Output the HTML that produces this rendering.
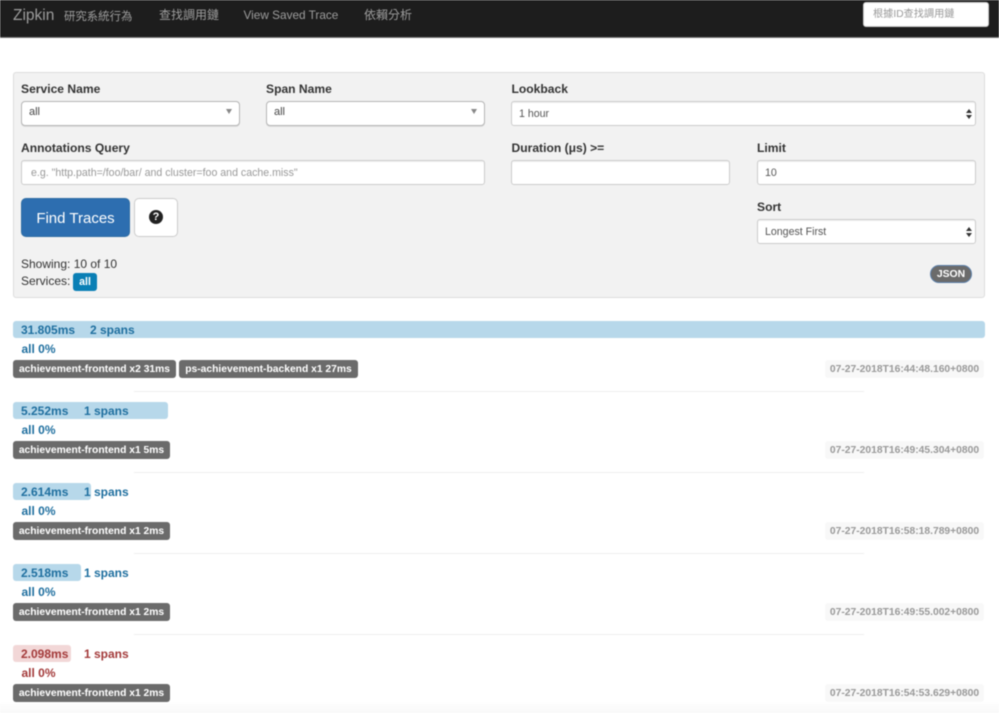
<!DOCTYPE html>
<html><head><meta charset="utf-8"><style>
html,body{margin:0;padding:0;background:#fff;}
#p{position:relative;width:999px;height:713px;overflow:hidden;background:#fff;font-family:"Liberation Sans","Noto Sans CJK TC",sans-serif;color:#333;filter:blur(.45px);}
#p div{position:absolute;box-sizing:border-box;white-space:nowrap;}
.nav{color:#9d9d9d;font-size:12px;top:7px;line-height:16px;}
.lb{font-weight:bold;font-size:12.1px;line-height:16px;color:#333;}
.in{background:#fff;border:1px solid #ccc;border-radius:3px;height:25px;font-size:10.6px;line-height:25px;padding-left:7px;color:#555;box-shadow:inset 0 1px 1px rgba(0,0,0,.07);}
.s2{border:1px solid #b5b5b5;border-radius:4px;box-shadow:0 1px 0 rgba(0,0,0,.08);color:#444;font-size:11px;line-height:20px;}
.ar{width:0;height:0;border-left:3px solid transparent;border-right:3px solid transparent;border-top:5px solid #888;}
.up{width:0;height:0;border-left:3px solid transparent;border-right:3px solid transparent;border-bottom:4px solid #333;}
.dn{width:0;height:0;border-left:3px solid transparent;border-right:3px solid transparent;border-top:4px solid #333;}
.bar{height:17px;border-radius:3px;}
.t{font-size:12px;font-weight:bold;line-height:16px;}
.b{color:#1f6f9f;}.r{color:#a33a3a;}
.g{height:18px;background:#6b6b6b;color:#fff;font-size:10.3px;font-weight:bold;line-height:19px;border-radius:3px;text-align:center;}
.d{left:825px;width:159px;height:18px;background:#f8f8f8;color:#999;font-size:10.3px;font-weight:bold;line-height:19px;border-radius:3px;text-align:center;}
.hr{left:134px;width:730px;height:1px;background:#eee;}
</style></head><body><div id="p">
<div style="left:0;top:0;width:999px;height:38px;background:#1d1d1d;border-bottom:1px solid #777;"></div>
<div style="left:13px;top:6px;color:#9d9d9d;font-size:15.5px;line-height:20px;">Zipkin</div>
<div class="nav" style="left:64px;font-size:11.4px;top:9px;">研究系統行為</div>
<div class="nav" style="left:159px;">查找調用鏈</div>
<div class="nav" style="left:243.5px;font-size:11.8px;">View Saved Trace</div>
<div class="nav" style="left:364px;">依賴分析</div>
<div style="left:863px;top:2px;width:126px;height:25px;background:#fff;border-radius:3px;border:1px solid #ccc;color:#999;font-size:10.2px;line-height:23px;padding-left:9px;">根據ID查找調用鏈</div>

<div style="left:13px;top:72px;width:972px;height:226px;background:#f2f2f2;border:1px solid #ddd;border-radius:3px;"></div>

<div class="lb" style="left:21px;top:81px;">Service Name</div>
<div class="in s2" style="left:21px;top:101px;width:219px;">all</div>
<div class="ar" style="left:226px;top:109px;"></div>
<div class="lb" style="left:266px;top:81px;">Span Name</div>
<div class="in s2" style="left:266px;top:101px;width:219px;">all</div>
<div class="ar" style="left:471px;top:109px;"></div>
<div class="lb" style="left:511.5px;top:81px;">Lookback</div>
<div class="in" style="left:511px;top:101px;width:465px;">1 hour</div>
<div class="up" style="left:966px;top:109px;"></div><div class="dn" style="left:966px;top:115px;"></div>

<div class="lb" style="left:21px;top:140px;">Annotations Query</div>
<div class="in" style="left:21px;top:160px;width:464px;color:#999;font-size:10.6px;padding-left:9px;">e.g. "http.path=/foo/bar/ and cluster=foo and cache.miss"</div>
<div class="lb" style="left:511.5px;top:140px;">Duration (μs) &gt;=</div>
<div class="in" style="left:511px;top:160px;width:219px;"></div>
<div class="lb" style="left:757px;top:140px;">Limit</div>
<div class="in" style="left:757px;top:160px;width:219px;">10</div>

<div style="left:21px;top:198px;width:109px;height:39px;background:#2d6eb0;border:1px solid #2e6da4;border-radius:5px;color:#fff;font-size:15px;line-height:39px;text-align:center;">Find Traces</div>
<div style="left:134px;top:198px;width:44px;height:39px;background:#fff;border:1px solid #ccc;border-radius:5px;"></div>
<div style="left:149px;top:210px;width:14px;height:14px;border-radius:50%;background:#222;color:#fff;font-size:11px;font-weight:bold;line-height:14px;text-align:center;">?</div>

<div class="lb" style="left:757px;top:199px;">Sort</div>
<div class="in" style="left:757px;top:219px;width:219px;height:25px;">Longest First</div>
<div class="up" style="left:966px;top:227px;"></div><div class="dn" style="left:966px;top:233px;"></div>

<div style="left:21px;top:256px;font-size:12px;line-height:16px;">Showing: 10 of 10</div>
<div style="left:21px;top:273px;font-size:12px;line-height:16px;">Services:</div>
<div style="left:73px;top:273px;width:24px;height:18px;background:#0a7fb5;color:#fff;font-size:10.6px;font-weight:bold;line-height:19px;text-align:center;border-radius:3px;">all</div>
<div style="left:930px;top:265px;width:42px;height:18px;background:#6b6b6b;border:1px solid #5a7ea8;color:#fff;font-size:10.4px;font-weight:bold;line-height:18px;text-align:center;border-radius:9px;">JSON</div>

<!-- row 1 -->
<div class="bar" style="left:13px;top:321px;width:972px;background:#b7d8ea;"></div>
<div class="t b" style="left:21px;top:322px;">31.805ms</div>
<div class="t b" style="left:90px;top:322px;">2 spans</div>
<div class="t b" style="left:21.5px;top:341px;">all 0%</div>
<div class="g" style="left:13px;top:360px;width:163px;">achievement-frontend x2 31ms</div>
<div class="g" style="left:179px;top:360px;width:179px;">ps-achievement-backend x1 27ms</div>
<div class="d" style="top:360px;">07-27-2018T16:44:48.160+0800</div>
<div class="hr" style="top:391px;"></div>

<!-- row 2 -->
<div class="bar" style="left:13px;top:402px;width:155px;background:#b7d8ea;"></div>
<div class="t b" style="left:21px;top:403px;">5.252ms</div>
<div class="t b" style="left:84px;top:403px;">1 spans</div>
<div class="t b" style="left:21.5px;top:422px;">all 0%</div>
<div class="g" style="left:13px;top:441px;width:157px;">achievement-frontend x1 5ms</div>
<div class="d" style="top:441px;">07-27-2018T16:49:45.304+0800</div>
<div class="hr" style="top:472px;"></div>

<!-- row 3 -->
<div class="bar" style="left:13px;top:483px;width:78px;background:#b7d8ea;"></div>
<div class="t b" style="left:21px;top:484px;">2.614ms</div>
<div class="t b" style="left:84px;top:484px;">1 spans</div>
<div class="t b" style="left:21.5px;top:503px;">all 0%</div>
<div class="g" style="left:13px;top:522px;width:157px;">achievement-frontend x1 2ms</div>
<div class="d" style="top:522px;">07-27-2018T16:58:18.789+0800</div>
<div class="hr" style="top:553px;"></div>

<!-- row 4 -->
<div class="bar" style="left:13px;top:564px;width:68px;background:#b7d8ea;"></div>
<div class="t b" style="left:21px;top:565px;">2.518ms</div>
<div class="t b" style="left:84px;top:565px;">1 spans</div>
<div class="t b" style="left:21.5px;top:584px;">all 0%</div>
<div class="g" style="left:13px;top:603px;width:157px;">achievement-frontend x1 2ms</div>
<div class="d" style="top:603px;">07-27-2018T16:49:55.002+0800</div>
<div class="hr" style="top:634px;"></div>

<!-- row 5 -->
<div class="bar" style="left:13px;top:645px;width:58px;background:#f2d7d7;"></div>
<div class="t r" style="left:21px;top:646px;">2.098ms</div>
<div class="t r" style="left:84px;top:646px;">1 spans</div>
<div class="t r" style="left:21.5px;top:665px;">all 0%</div>
<div class="g" style="left:13px;top:684px;width:157px;">achievement-frontend x1 2ms</div>
<div class="d" style="top:684px;">07-27-2018T16:54:53.629+0800</div>
<div style="left:0;top:703px;width:999px;height:10px;background:linear-gradient(#fdfdfd,#f9f9f9);"></div>
</div></body></html>
